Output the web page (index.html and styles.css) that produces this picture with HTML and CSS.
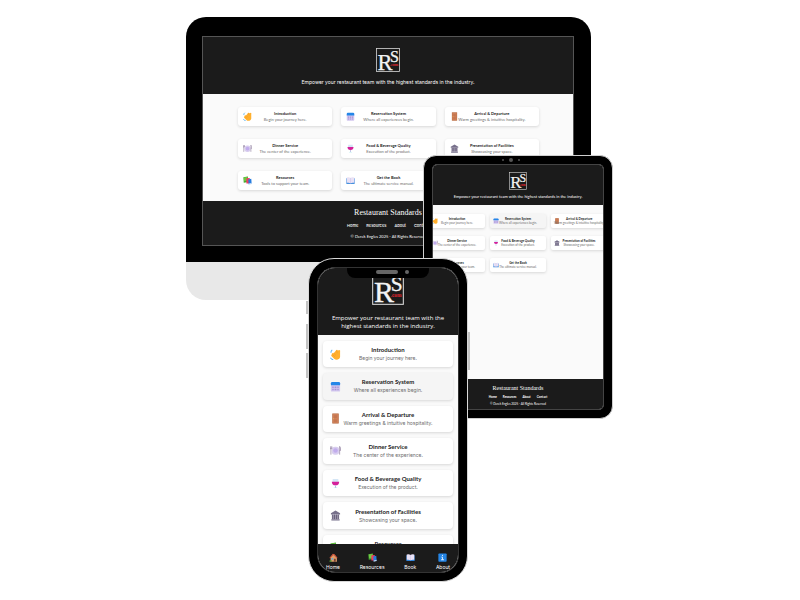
FILE: index.html
```html
<!DOCTYPE html>
<html lang="en">
<head>
<meta charset="utf-8">
<meta name="viewport" content="width=device-width, initial-scale=1">
<title>Restaurant Standards</title>
<link rel="stylesheet" href="styles.css">
</head>
<body>
<svg class="sprite" aria-hidden="true">
  <symbol id="logo" viewBox="0 0 48 48">
    <rect x="1" y="1" width="46" height="46" fill="#1b1b1b" stroke="#d8d8d8" stroke-width="1.6"/>
    <text x="3" y="43" font-size="45" fill="#f4f4f4" stroke="#f4f4f4" stroke-width="0.5">R</text>
    <text x="28" y="27" font-size="32" fill="#f4f4f4" stroke="#f4f4f4" stroke-width="0.5">S</text>
    <text x="28" y="36" font-size="8" font-weight="bold" fill="#e0262e">.com</text>
  </symbol>
  <symbol id="wave" viewBox="0 0 24 24">
    <path d="M8 9l6-7q2-1 3 1l4-1q2 1 1 4v12q-1 4-5 5-5 1-8-2l-6-6q-1-2 1-3-1-2 1-3 1-1 3 0z" fill="#ffb02e"/>
    <path d="M8 9l5 5M5 12l6 5M14 3l2 6" stroke="#ee9526" stroke-width="1.2"/>
    <path d="M5 2q-3 2-3 6M1 19q2 4 6 4" fill="none" stroke="#62b5f0" stroke-width="2.4"/>
  </symbol>
  <symbol id="calendar" viewBox="0 0 24 24">
    <rect x="2" y="3" width="20" height="20" rx="2" fill="#d3c7ef"/>
    <path d="M2 9V5q0-3 3-3h14q3 0 3 3v4z" fill="#2486e8"/>
    <path d="M5 12h3v3H5zM10 12h4v3h-4zM16 12h3v3h-3zM5 17h3v3H5zM10 17h4v3h-4zM16 17h3v3h-3z" fill="#a692d5"/>
  </symbol>
  <symbol id="door" viewBox="0 0 24 24">
    <rect x="5" y="1" width="14" height="22" fill="#b4683f"/>
    <path d="M6 2h12v20H6z" fill="#cf8058"/>
    <path d="M9 5h6v6H9zM9 14h6v6H9z" fill="#c47650"/>
    <circle cx="8" cy="12.5" r="1" fill="#ffce59"/>
  </symbol>
  <symbol id="plate" viewBox="0 0 24 24">
    <rect x="4" y="4" width="16" height="17" rx="7" fill="#d8cdef"/>
    <circle cx="12" cy="12" r="5" fill="#c1acec"/>
    <path d="M2 3v18M0 3v5h4V3M21 21V3q3 3 2 9h-2" fill="none" stroke="#9a8ba9" stroke-width="1.7"/>
  </symbol>
  <symbol id="wine" viewBox="0 0 24 24">
    <path d="M6 2h12l1 8q-1 6-7 6t-7-6z" fill="#d5e6f6"/>
    <path d="M4 8h16q0 8-8 8T4 8z" fill="#d5219a"/>
    <path d="M12 16v5" stroke="#b8a9df" stroke-width="2"/>
    <path d="M7 22q5-3 10 0z" fill="#7bd9dc"/>
  </symbol>
  <symbol id="bank" viewBox="0 0 24 24">
    <path d="M12 1l10 6v3H2V7zM3 20h18v3H3z" fill="#77708b"/>
    <path d="M4 10h16v10H4z" fill="#aaa3b9"/>
    <path d="M6 10v10M10 10v10M14 10v10M18 10v10" stroke="#5d5570" stroke-width="2"/>
  </symbol>
  <symbol id="books" viewBox="0 0 24 24">
    <path d="M1 3l12-2 1 15-12 2z" fill="#44a72f"/>
    <path d="M2 4l10-2v10l-9 2z" fill="#6fc943"/>
    <path d="M9 6l9-1v15H9z" fill="#ef3e62"/>
    <path d="M14 9l8-2 1 13-8 2z" fill="#277de0"/>
    <path d="M15 20l8-2v3l-8 2z" fill="#bdd8f6"/>
  </symbol>
  <symbol id="book" viewBox="0 0 24 24">
    <path d="M1 6h22v15H1z" fill="#2e83da"/>
    <path d="M2 4q6-2 10 1 4-3 10-1v14q-6-1-10 1-4-2-10-1z" fill="#e9e1f5"/>
    <path d="M12 5v14" stroke="#c8bbe6" stroke-width="1.2"/>
  </symbol>
  <symbol id="house" viewBox="0 0 24 24">
    <path d="M4 11l8-8 9 9v11H4z" fill="#dfa06b"/>
    <path d="M1 13L10 2l5 1 8 10-3 1-8-9-9 9z" fill="#d05a40"/>
    <path d="M13 15h5v8h-5z" fill="#774435"/>
    <path d="M7 13h4v5H7z" fill="#5ca9e2"/>
    <path d="M2 19h5v4H1z" fill="#4e9939"/>
  </symbol>
  <symbol id="info" viewBox="0 0 24 24">
    <rect x="1" y="1" width="22" height="22" rx="2" fill="#2585e5"/>
    <path d="M12 5v3M9 11h3v7M8 18h8" fill="none" stroke="#e6f3ff" stroke-width="2.4"/>
  </symbol>
</svg>

<main class="showcase">
  <section class="desktop" aria-label="Desktop view">
    <div class="monitor">
      <div class="screen">
        <header class="hero">
          <svg class="logo" role="img" aria-label="RS.com"><use href="#logo"/></svg>
          <p class="tagline">Empower your restaurant team with the highest standards in the industry.</p>
        </header>
        <div class="cards">
          <a class="card" href="#"><svg class="icon"><use href="#wave"/></svg><span class="copy"><strong>Introduction</strong><span>Begin your journey here.</span></span></a>
          <a class="card" href="#"><svg class="icon"><use href="#calendar"/></svg><span class="copy"><strong>Reservation System</strong><span>Where all experiences begin.</span></span></a>
          <a class="card" href="#"><svg class="icon"><use href="#door"/></svg><span class="copy"><strong>Arrival &amp; Departure</strong><span>Warm greetings &amp; intuitive hospitality.</span></span></a>
          <a class="card" href="#"><svg class="icon"><use href="#plate"/></svg><span class="copy"><strong>Dinner Service</strong><span>The center of the experience.</span></span></a>
          <a class="card" href="#"><svg class="icon"><use href="#wine"/></svg><span class="copy"><strong>Food &amp; Beverage Quality</strong><span>Execution of the product.</span></span></a>
          <a class="card" href="#"><svg class="icon"><use href="#bank"/></svg><span class="copy"><strong>Presentation of Facilities</strong><span>Showcasing your space.</span></span></a>
          <a class="card" href="#"><svg class="icon"><use href="#books"/></svg><span class="copy"><strong>Resources</strong><span>Tools to support your team.</span></span></a>
          <a class="card" href="#"><svg class="icon"><use href="#book"/></svg><span class="copy"><strong>Get the Book</strong><span>The ultimate service manual.</span></span></a>
        </div>
        <footer class="footer">
          <h2>Restaurant Standards</h2>
          <nav class="links"><a href="#">Home</a><a href="#">Resources</a><a href="#">About</a><a href="#">Contact</a></nav>
          <p>© Derek Engles 2025 - All Rights Reserved</p>
        </footer>
      </div>
    </div>
  </section>

  <section class="tablet" aria-label="Tablet view">
    <div class="camera"><i></i><i></i><i></i></div>
    <div class="screen">
      <header class="hero">
        <svg class="logo" role="img" aria-label="RS.com"><use href="#logo"/></svg>
        <p class="tagline">Empower your restaurant team with the highest standards in the industry.</p>
      </header>
      <div class="cards">
        <a class="card" href="#"><svg class="icon"><use href="#wave"/></svg><span class="copy"><strong>Introduction</strong><span>Begin your journey here.</span></span></a>
        <a class="card active" href="#"><svg class="icon"><use href="#calendar"/></svg><span class="copy"><strong>Reservation System</strong><span>Where all experiences begin.</span></span></a>
        <a class="card" href="#"><svg class="icon"><use href="#door"/></svg><span class="copy"><strong>Arrival &amp; Departure</strong><span>Warm greetings &amp; intuitive hospitality.</span></span></a>
        <a class="card" href="#"><svg class="icon"><use href="#plate"/></svg><span class="copy"><strong>Dinner Service</strong><span>The center of the experience.</span></span></a>
        <a class="card" href="#"><svg class="icon"><use href="#wine"/></svg><span class="copy"><strong>Food &amp; Beverage Quality</strong><span>Execution of the product.</span></span></a>
        <a class="card" href="#"><svg class="icon"><use href="#bank"/></svg><span class="copy"><strong>Presentation of Facilities</strong><span>Showcasing your space.</span></span></a>
        <a class="card" href="#"><svg class="icon"><use href="#books"/></svg><span class="copy"><strong>Resources</strong><span>Tools to support your team.</span></span></a>
        <a class="card" href="#"><svg class="icon"><use href="#book"/></svg><span class="copy"><strong>Get the Book</strong><span>The ultimate service manual.</span></span></a>
      </div>
      <footer class="footer">
        <h2>Restaurant Standards</h2>
        <nav class="links"><a href="#">Home</a><a href="#">Resources</a><a href="#">About</a><a href="#">Contact</a></nav>
        <p>© Derek Engles 2025 - All Rights Reserved</p>
      </footer>
    </div>
  </section>

  <section class="phone" aria-label="Phone view">
    <i class="key mute"></i><i class="key up"></i><i class="key down"></i><i class="key power"></i>
    <div class="screen">
      <div class="notch"><i class="speaker"></i><i class="lens"></i></div>
      <header class="hero">
        <svg class="logo" role="img" aria-label="RS.com"><use href="#logo"/></svg>
        <p class="tagline">Empower your restaurant team with the<br>highest standards in the industry.</p>
      </header>
      <div class="feed">
        <div class="cards">
          <a class="card" href="#"><svg class="icon"><use href="#wave"/></svg><span class="copy"><strong>Introduction</strong><span>Begin your journey here.</span></span></a>
          <a class="card active" href="#"><svg class="icon"><use href="#calendar"/></svg><span class="copy"><strong>Reservation System</strong><span>Where all experiences begin.</span></span></a>
          <a class="card" href="#"><svg class="icon"><use href="#door"/></svg><span class="copy"><strong>Arrival &amp; Departure</strong><span>Warm greetings &amp; intuitive hospitality.</span></span></a>
          <a class="card" href="#"><svg class="icon"><use href="#plate"/></svg><span class="copy"><strong>Dinner Service</strong><span>The center of the experience.</span></span></a>
          <a class="card" href="#"><svg class="icon"><use href="#wine"/></svg><span class="copy"><strong>Food &amp; Beverage Quality</strong><span>Execution of the product.</span></span></a>
          <a class="card" href="#"><svg class="icon"><use href="#bank"/></svg><span class="copy"><strong>Presentation of Facilities</strong><span>Showcasing your space.</span></span></a>
          <a class="card" href="#"><svg class="icon"><use href="#books"/></svg><span class="copy"><strong>Resources</strong><span>Tools to support your team.</span></span></a>
        </div>
      </div>
      <nav class="tabs">
        <a href="#"><svg class="icon"><use href="#house"/></svg>Home</a>
        <a href="#"><svg class="icon"><use href="#books"/></svg>Resources</a>
        <a href="#"><svg class="icon"><use href="#book"/></svg>Book</a>
        <a href="#"><svg class="icon"><use href="#info"/></svg>About</a>
      </nav>
    </div>
  </section>
</main>
</body>
</html>
```

FILE: styles.css
```css
* { box-sizing: border-box; }

body {
  margin: 0;
  background: #fff;
  color: #1b1b1b;
  font-family: Lato, "Liberation Sans", sans-serif;
}

h2, p { margin: 0; }
a { color: inherit; text-decoration: none; }
.sprite { position: absolute; width: 0; height: 0; }
#logo { font-family: "Liberation Serif", serif; }

/* Devices overlap each other on a shared canvas */
.showcase {
  position: relative;
  width: 428px;
  height: 566px;
  margin: 17px auto 0;
}

/* Shared page parts */
.screen {
  display: flex;
  flex-direction: column;
  overflow: hidden;
  background: #fafafa;
}

.hero {
  display: flex;
  flex-direction: column;
  align-items: center;
  background: #1b1b1b;
  color: #fff;
  text-align: center;
}

.logo { display: block; flex: none; }
.tagline { white-space: nowrap; }
.cards { display: grid; }

.card {
  display: grid;
  align-items: center;
  border-radius: 3px;
  background: #fff;
  box-shadow: 0 1px 3px rgba(0, 0, 0, 0.14);
}

.card.active { background: #f5f5f5; }
.card > * { grid-area: 1 / 1; }
.icon { display: block; }

.copy {
  display: flex;
  flex-direction: column;
  align-items: center;
  white-space: nowrap;
}

.copy span { color: #6c6c6c; }

.footer {
  display: flex;
  flex-direction: column;
  align-items: center;
  background: #1b1b1b;
  color: #fff;
}

.footer h2 { font-family: "Liberation Serif", serif; font-weight: 400; }
.links { display: flex; }

/* Desktop */
.desktop {
  position: absolute;
  left: 0;
  top: 0;
  width: 405px;
  padding-bottom: 38px;
  border-radius: 20px;
  background: #e8e8e8;
}

.monitor {
  padding: 19px 17px 16px 16px;
  border-radius: 20px 20px 0 0;
  background: #000;
}

.desktop .screen { border: 1px solid #555; }
.desktop .hero { padding: 11px 0 8px; gap: 6px; }
.desktop .logo { width: 24px; height: 24px; }
.desktop .tagline { font-family: Inter, sans-serif; font-size: 5px; line-height: 8px; }

.desktop .cards {
  grid-template-columns: repeat(3, 1fr);
  gap: 13px 9px;
  padding: 13px 34px 11px 35px;
}

.desktop .card { height: 19px; padding: 0 5px; }
.desktop .card .icon { width: 9px; height: 9px; }
.desktop .copy { font-size: 4px; line-height: 6px; }
.desktop .footer { padding: 7px 0 5px; font-size: 4px; line-height: 6px; gap: 5px; }
.desktop .footer h2 { font-size: 8px; line-height: 10px; }
.desktop .links { gap: 8px; font-family: Inter, sans-serif; font-weight: 500; }

/* Tablet */
.tablet {
  position: absolute;
  left: 237px;
  top: 138px;
  width: 190px;
  height: 264px;
  padding: 8px;
  border: 1px solid #cfcfcf;
  border-radius: 13px;
  background: #000;
}

.camera {
  position: absolute;
  top: 2px;
  left: 0;
  right: 14px;
  display: flex;
  align-items: center;
  justify-content: center;
  gap: 5px;
}

.camera i { width: 2px; height: 2px; border-radius: 50%; background: #555; }
.camera i:nth-child(2) { width: 4px; height: 4px; }

.tablet .screen { height: 100%; border: 1px solid #444; border-radius: 5px; }
.tablet .hero { padding: 7px 0 5px; gap: 4px; }
.tablet .logo { width: 18px; height: 18px; }
.tablet .tagline { font-size: 4px; line-height: 6px; }

.tablet .cards {
  flex: 1;
  grid-template-columns: repeat(3, 56px);
  justify-content: center;
  align-content: start;
  gap: 8px 5px;
  padding-top: 9px;
}

.tablet .card { height: 14px; padding: 0 3px; border-radius: 2px; }
.tablet .card .icon { width: 6px; height: 6px; }
.tablet .copy { font-size: 3px; line-height: 4px; }
.tablet .footer { padding: 5px 0 3px; font-size: 3px; line-height: 4px; gap: 3px; }
.tablet .footer h2 { font-size: 6px; line-height: 8px; }
.tablet .links { gap: 6px; font-weight: 700; }

/* Phone */
.phone {
  position: absolute;
  left: 122px;
  top: 241px;
  width: 160px;
  height: 324px;
  padding: 8px;
  border: 1px solid #d8d8d8;
  border-radius: 26px;
  background: #000;
}

.key { position: absolute; left: -3px; width: 2px; background: #c4c4c4; }
.key.mute { top: 42px; height: 13px; }
.key.up { top: 65px; height: 25px; }
.key.down { top: 94px; height: 25px; }
.key.power { left: auto; right: -3px; top: 73px; height: 38px; }

.phone .screen {
  position: relative;
  height: 100%;
  border: 1px solid #333;
  border-radius: 18px;
}

.notch {
  position: absolute;
  top: -1px;
  left: 29px;
  right: 29px;
  display: flex;
  align-items: center;
  justify-content: flex-end;
  gap: 7px;
  height: 11px;
  padding: 0 20px 2px 0;
  border-radius: 0 0 8px 8px;
  background: #000;
}

.speaker { width: 22px; height: 4px; border-radius: 2px; background: #666; }
.lens { width: 4px; height: 4px; border-radius: 50%; background: #666; }

.phone .hero { padding: 5px 0; gap: 9px; }
.phone .logo { width: 32px; height: 32px; }
.phone .tagline { font-family: "Open Sans", sans-serif; font-size: 6px; line-height: 8px; }
.phone .feed { flex: 1; min-height: 0; overflow: hidden; }

.phone .cards {
  grid-auto-rows: 1fr;
  gap: 6px;
  min-height: 226px;
  padding: 6px 5px 0;
}

.phone .card { padding: 0 7px; border-radius: 4px; }
.phone .card .icon { width: 11px; height: 11px; }
.phone .copy { font-size: 6px; line-height: 8px; }
.phone .copy span { font-family: Inter, sans-serif; font-size: 5px; }

.tabs {
  display: flex;
  justify-content: space-between;
  padding: 9px 8px 1px;
  background: #1b1b1b;
  color: #fff;
  font-family: Inter, sans-serif;
  font-size: 5px;
  line-height: 8px;
}

.tabs a { display: flex; flex-direction: column; align-items: center; gap: 1px; }
.tabs .icon { width: 9px; height: 9px; }
```
